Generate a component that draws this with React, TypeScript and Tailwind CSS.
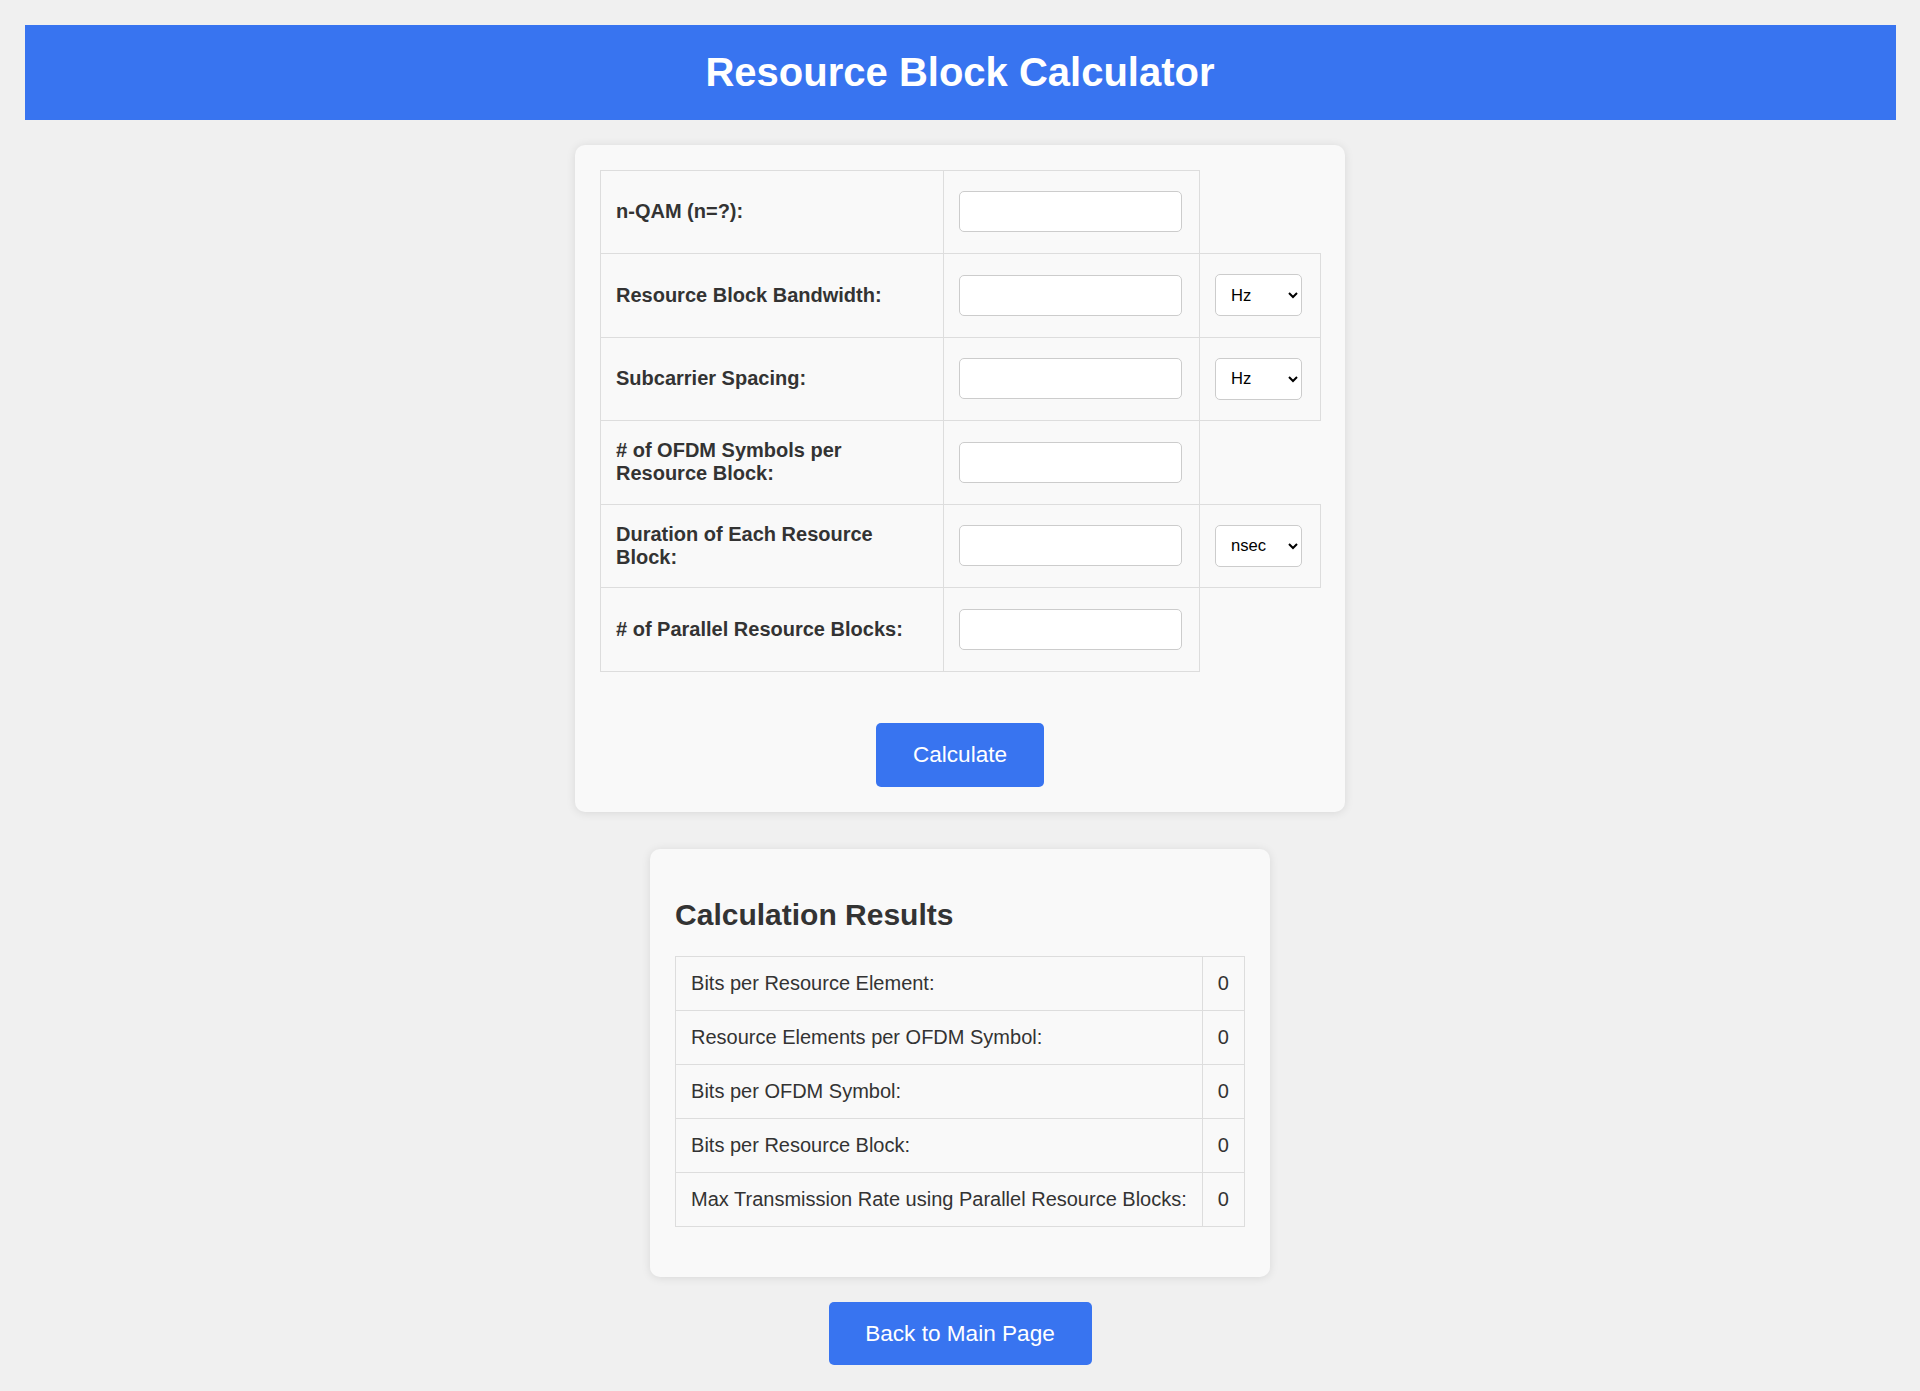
import React from "react";

const labelCell =
  "border border-[#dddddd] px-[15px] h-[83.5px] align-middle font-bold text-left";
const inputCell = "border border-[#dddddd] px-[15px] h-[83.5px] align-middle";

function TextInput() {
  return (
    <input
      type="text"
      className="block w-[223px] h-[41px] border border-[#cccccc] rounded-[5px] bg-white px-[10px] text-[20px] outline-none"
    />
  );
}

function UnitSelect({ value }: { value: string }) {
  return (
    <select
      defaultValue={value}
      className="block w-[87px] h-[42px] border border-[#cccccc] rounded-[5px] bg-white pl-[11px] pr-[4px] text-[16.6px] text-black"
    >
      {value === "nsec" ? (
        <>
          <option value="nsec">nsec</option>
          <option value="usec">usec</option>
          <option value="msec">msec</option>
          <option value="sec">sec</option>
        </>
      ) : (
        <>
          <option value="Hz">Hz</option>
          <option value="kHz">kHz</option>
          <option value="MHz">MHz</option>
          <option value="GHz">GHz</option>
        </>
      )}
    </select>
  );
}

const results = [
  "Bits per Resource Element:",
  "Resource Elements per OFDM Symbol:",
  "Bits per OFDM Symbol:",
  "Bits per Resource Block:",
  "Max Transmission Rate using Parallel Resource Blocks:",
];

export default function App() {
  return (
    <div className="min-h-[1391px] bg-[#f0f0f0] p-[24.5px] font-['Liberation_Sans',Arial,sans-serif] text-[20px] leading-[normal] text-[#333333]">
      <header className="h-[95px] bg-[#3874f0] flex items-center justify-center">
        <h1 className="text-[40px] font-bold text-white leading-[normal]">
          Resource Block Calculator
        </h1>
      </header>

      <div className="mx-auto mt-[25px] w-[770px] rounded-[10px] bg-[#f9f9f9] p-[25px] shadow-[0_1px_10px_rgba(0,0,0,0.1)]">
        <table className="w-[720px] table-fixed border-collapse">
          <colgroup>
            <col className="w-[343px]" />
            <col className="w-[256px]" />
            <col className="w-[121px]" />
          </colgroup>
          <tbody>
            <tr>
              <td className={labelCell}>n-QAM (n=?):</td>
              <td className={inputCell}>
                <TextInput />
              </td>
            </tr>
            <tr>
              <td className={labelCell}>Resource Block Bandwidth:</td>
              <td className={inputCell}>
                <TextInput />
              </td>
              <td className={inputCell}>
                <UnitSelect value="Hz" />
              </td>
            </tr>
            <tr>
              <td className={labelCell}>Subcarrier Spacing:</td>
              <td className={inputCell}>
                <TextInput />
              </td>
              <td className={inputCell}>
                <UnitSelect value="Hz" />
              </td>
            </tr>
            <tr>
              <td className={labelCell}># of OFDM Symbols per Resource Block:</td>
              <td className={inputCell}>
                <TextInput />
              </td>
            </tr>
            <tr>
              <td className={labelCell}>Duration of Each Resource Block:</td>
              <td className={inputCell}>
                <TextInput />
              </td>
              <td className={inputCell}>
                <UnitSelect value="nsec" />
              </td>
            </tr>
            <tr>
              <td className={labelCell}># of Parallel Resource Blocks:</td>
              <td className={inputCell}>
                <TextInput />
              </td>
            </tr>
          </tbody>
        </table>
        <button
          type="button"
          className="mx-auto mt-[51px] block h-[64px] w-[168px] rounded-[5px] bg-[#3874f0] text-[22.6px] text-white"
        >
          Calculate
        </button>
      </div>

      <div className="mx-auto mt-[37px] w-fit rounded-[10px] bg-[#f9f9f9] px-[25px] pt-[25px] pb-[25px] shadow-[0_1px_10px_rgba(0,0,0,0.1)]">
        <h2 className="mt-[24.4px] mb-[24.4px] text-[30px] font-bold leading-[normal]">
          Calculation Results
        </h2>
        <table className="mb-[25px] border-collapse">
          <tbody>
            {results.map((r) => (
              <tr key={r}>
                <td className="border border-[#dddddd] px-[15px] py-[15px] leading-[23px] whitespace-nowrap">
                  {r}
                </td>
                <td className="border border-[#dddddd] px-[15px] py-[15px] leading-[23px]">
                  0
                </td>
              </tr>
            ))}
          </tbody>
        </table>
      </div>

      <button
        type="button"
        className="mx-auto mt-[25px] block h-[63px] w-[263px] rounded-[5px] bg-[#3874f0] text-[22.6px] text-white"
      >
        Back to Main Page
      </button>
    </div>
  );
}
